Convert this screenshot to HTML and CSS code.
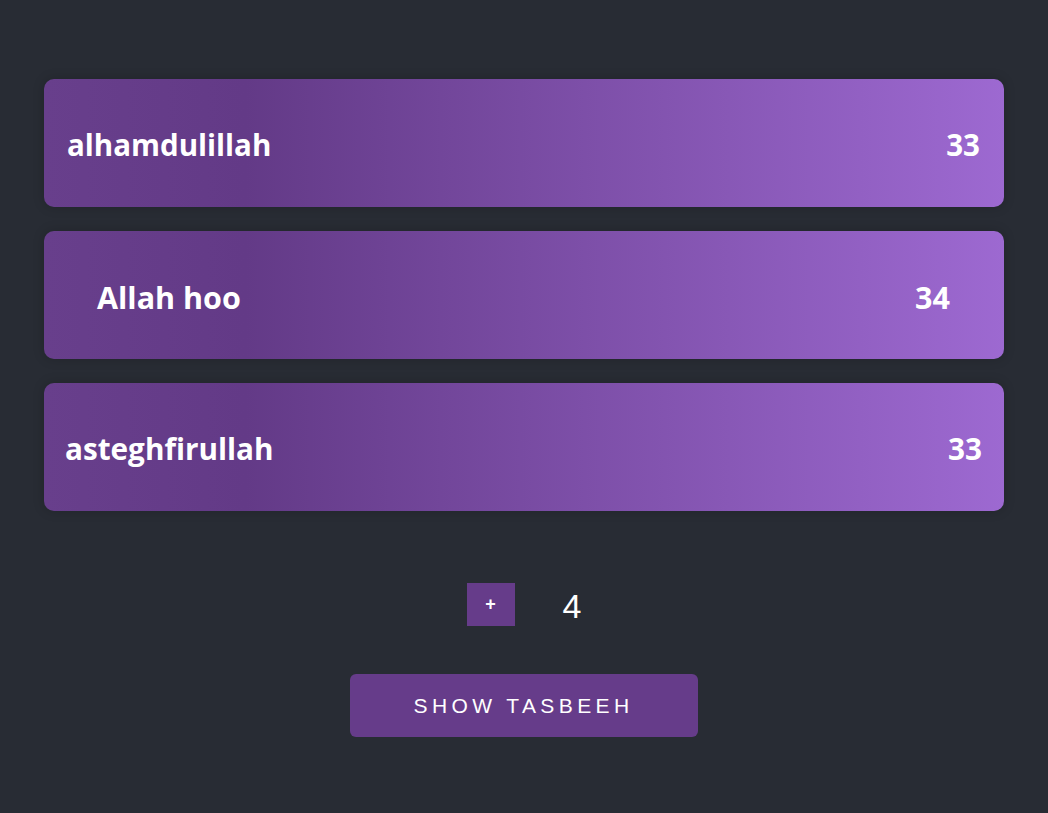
FILE: index.html
```html
<!DOCTYPE html>
<html>
<head>
<meta charset="utf-8">
<link rel="stylesheet" href="styles.css">
</head>
<body>
<div class="app">
  <div class="list">
    <div class="card card-a"><span class="name">alhamdulillah</span><span class="count">33</span></div>
    <div class="card card-b"><span class="name">Allah hoo</span><span class="count">34</span></div>
    <div class="card card-c"><span class="name">asteghfirullah</span><span class="count">33</span></div>
  </div>
  <div class="counter">
    <button class="plus">+</button>
    <span class="num">4</span>
  </div>
  <button class="show">SHOW TASBEEH</button>
</div>
</body>
</html>
```
FILE: styles.css
```css
html, body {
  margin: 0;
  padding: 0;
  background: #282c34;
  height: 100%;
}
.app {
  display: flex;
  flex-direction: column;
  align-items: center;
  padding-top: 79px;
  font-family: "Open Sans", "Noto Sans", sans-serif;
}
.list {
  width: 960px;
  display: flex;
  flex-direction: column;
  gap: 24px;
}
.card {
  height: 128px;
  box-sizing: border-box;
  border-radius: 10px;
  background: linear-gradient(90deg, #683f8c 0%, #633a87 21%, #9d69d1 100%);
  box-shadow: 0 0 12px rgba(0, 0, 0, 0.18);
  display: flex;
  align-items: center;
  justify-content: space-between;
  color: #fff;
  font-weight: 700;
}
.card-a { padding: 2px 24px 0 23px; font-size: 29.5px; }
.card-b { padding: 3px 54px 0 53px; font-size: 30.5px; }
.card-c { padding: 3px 22px 0 21px; font-size: 29.7px; }
.counter {
  margin-top: 72px;
  display: flex;
  align-items: center;
  gap: 48px;
  padding-left: 2px;
}
.plus {
  width: 48px;
  height: 43px;
  border: none;
  background: #663c8a;
  color: #fff;
  font-family: "Liberation Sans", Arial, sans-serif;
  font-size: 18px;
  font-weight: 700;
  padding: 0;
}
.num {
  color: #fff;
  font-family: "Liberation Sans", Arial, sans-serif;
  font-size: 34px;
  width: 21px;
  padding-top: 3px;
}
.show {
  margin-top: 48px;
  width: 348px;
  height: 63px;
  border: none;
  border-radius: 6px;
  background: #663c8a;
  color: #fff;
  font-family: "Liberation Sans", Arial, sans-serif;
  font-size: 21px;
  letter-spacing: 4.4px;
  padding: 0 1px 0 0;
}
```
